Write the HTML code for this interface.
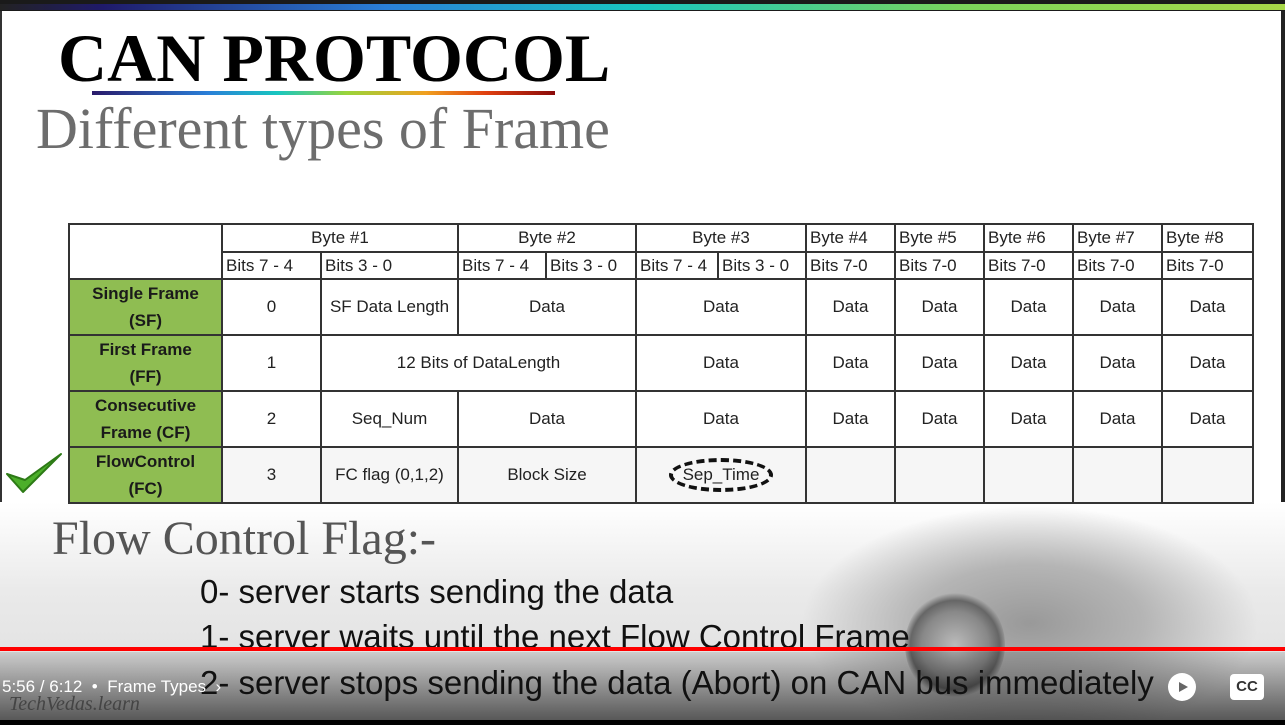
<!DOCTYPE html>
<html><head><meta charset="utf-8"><style>
*{margin:0;padding:0;box-sizing:border-box}
body{width:1285px;height:725px;overflow:hidden;position:relative;background:#fff;font-family:"Liberation Sans",sans-serif}
.abs{position:absolute}
table{position:absolute;left:68px;top:223px;border-collapse:collapse;table-layout:fixed;width:1184px;font-family:"Liberation Sans Narrow","Liberation Sans",sans-serif;font-size:17px;color:#222}
td{border:2px solid #333;text-align:center;vertical-align:middle;padding:0;overflow:hidden;white-space:nowrap}
td.l{text-align:left;padding-left:3px}
td.g{background:#8fbd52;font-weight:bold;line-height:27px;color:#1a1a1a}
.t{font-family:'Liberation Sans Narrow','Liberation Sans',sans-serif;font-size:33px;line-height:36px;color:#111}
</style></head><body>
<div class="abs" style="left:0;top:0;width:1285px;height:11px;background:#1a1a1a"></div>
<div class="abs" style="left:0;top:4px;width:1285px;height:6px;background:linear-gradient(90deg,#222 0%,#1f1a6a 8%,#2a7fd8 30%,#18c6c0 50%,#7bd45a 75%,#a8d848 100%)"></div>
<div class="abs" style="left:0;top:11px;width:2px;height:709px;background:#333"></div>
<div class="abs" style="left:1281px;top:11px;width:4px;height:709px;background:#222"></div>
<div class="abs" style="left:58px;top:18px;font-family:'Liberation Serif',serif;font-weight:bold;font-size:68px;line-height:80px;color:#000">CAN PROTOCOL</div>
<div class="abs" style="left:92px;top:91px;width:463px;height:4px;background:linear-gradient(90deg,#2a1a6a,#2a7fd8 25%,#18c6c0 40%,#9ad43a 55%,#f0a020 72%,#e04010 85%,#8a0a0a)"></div>
<div class="abs" style="left:36px;top:96px;font-family:'Liberation Serif',serif;font-size:58px;line-height:66px;color:#6d6d6d">Different types of Frame</div>
<div class="abs" style="left:0;top:502px;width:1285px;height:220px;background:linear-gradient(180deg,#fff 0%,#eaeaea 40%,#dcdcdc 100%)"></div>
<div class="abs" style="left:800px;top:505px;width:460px;height:215px;background:radial-gradient(ellipse at 50% 55%,#999 0%,#b5b5b5 35%,rgba(220,220,220,0) 70%)"></div>
<div class="abs" style="left:905px;top:590px;width:100px;height:110px;border-radius:50%;background:radial-gradient(circle,#bbb 0%,#888 45%,#666 60%,rgba(0,0,0,0) 70%)"></div>
<table>
<colgroup><col style="width:153px"><col style="width:99px"><col style="width:137px"><col style="width:88px"><col style="width:90px"><col style="width:82px"><col style="width:88px"><col style="width:89px"><col style="width:89px"><col style="width:89px"><col style="width:89px"><col style="width:91px"></colgroup>
<tr style="height:28px"><td rowspan="2"></td><td colspan="2">Byte #1</td><td colspan="2">Byte #2</td><td colspan="2">Byte #3</td><td class="l">Byte #4</td><td class="l">Byte #5</td><td class="l">Byte #6</td><td class="l">Byte #7</td><td class="l">Byte #8</td></tr>
<tr style="height:27px"><td class="l">Bits 7 - 4</td><td class="l">Bits 3 - 0</td><td class="l">Bits 7 - 4</td><td class="l">Bits 3 - 0</td><td class="l">Bits 7 - 4</td><td class="l">Bits 3 - 0</td><td class="l">Bits 7-0</td><td class="l">Bits 7-0</td><td class="l">Bits 7-0</td><td class="l">Bits 7-0</td><td class="l">Bits 7-0</td></tr>
<tr style="height:54px"><td class="g">Single Frame<br>(SF)</td><td>0</td><td>SF Data Length</td><td colspan="2">Data</td><td colspan="2">Data</td><td>Data</td><td>Data</td><td>Data</td><td>Data</td><td>Data</td></tr>
<tr style="height:54px"><td class="g">First Frame<br>(FF)</td><td>1</td><td colspan="3">12 Bits of DataLength</td><td colspan="2">Data</td><td>Data</td><td>Data</td><td>Data</td><td>Data</td><td>Data</td></tr>
<tr style="height:54px"><td class="g">Consecutive<br>Frame (CF)</td><td>2</td><td>Seq_Num</td><td colspan="2">Data</td><td colspan="2">Data</td><td>Data</td><td>Data</td><td>Data</td><td>Data</td><td>Data</td></tr>
<tr style="height:54px;background:#f6f6f6"><td class="g">FlowControl<br>(FC)</td><td>3</td><td>FC flag (0,1,2)</td><td colspan="2">Block Size</td><td colspan="2"><span style="display:inline-block;border:4px dashed #111;border-radius:50%;padding:3px 10px">Sep_Time</span></td><td></td><td></td><td></td><td></td><td></td></tr>
</table>
<svg class="abs" style="left:5px;top:450px" width="58" height="46" viewBox="0 0 58 46"><path d="M2 24 L18 42 L56 4 L20 30 Z" fill="#4caf2a" stroke="#2d7a16" stroke-width="2" stroke-linejoin="round"/></svg>
<div class="abs" style="left:52px;top:510px;font-family:'Liberation Serif',serif;font-size:48px;line-height:58px;color:#555">Flow Control Flag:-</div>
<div class="abs t" style="left:200px;top:574px">0- server starts sending the data</div>
<div class="abs t" style="left:200px;top:619px">1- server waits until the next Flow Control Frame</div>
<div class="abs" style="left:0;top:652px;width:1285px;height:68px;background:linear-gradient(180deg,rgba(0,0,0,0.1),rgba(0,0,0,0.6))"></div>
<div class="abs t" style="left:200px;top:665px">2- server stops sending the data (Abort) on CAN bus immediately</div>
<div class="abs" style="left:0;top:647px;width:1285px;height:4px;background:#f00"></div>
<div class="abs" style="left:2px;top:677px;font-size:17px;color:#fff;font-family:'Liberation Sans Narrow','Liberation Sans',sans-serif">5:56 / 6:12 &nbsp;•&nbsp; Frame Types &nbsp;›</div>
<div class="abs" style="left:9px;top:693px;font-family:'Liberation Serif',serif;font-style:italic;font-size:20px;color:#444">TechVedas.learn</div>
<div class="abs" style="left:1168px;top:673px;width:28px;height:28px;border-radius:50%;background:#fff"></div>
<svg class="abs" style="left:1176px;top:680px" width="14" height="14"><path d="M3 2 L12 7 L3 12Z" fill="#666"/></svg>
<div class="abs" style="left:1230px;top:674px;width:34px;height:26px;border-radius:4px;background:#fff;color:#333;font-weight:bold;font-size:15px;text-align:center;line-height:26px">CC</div>
<div class="abs" style="left:0;top:720px;width:1285px;height:5px;background:#000"></div>
</body></html>
